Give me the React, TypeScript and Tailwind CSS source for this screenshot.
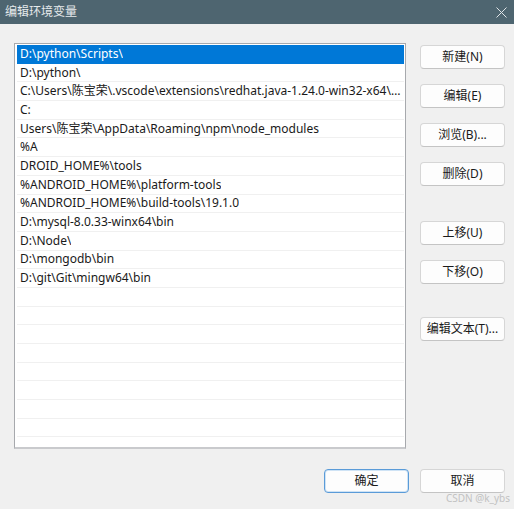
const paths = [
  "D:\\python\\Scripts\\",
  "D:\\python\\",
  "C:\\Users\\陈宝荣\\.vscode\\extensions\\redhat.java-1.24.0-win32-x64\\jre\\17.0.4.1-win32-x86_64\\bin",
  "C:",
  "Users\\陈宝荣\\AppData\\Roaming\\npm\\node_modules",
  "%A",
  "DROID_HOME%\\tools",
  "%ANDROID_HOME%\\platform-tools",
  "%ANDROID_HOME%\\build-tools\\19.1.0",
  "D:\\mysql-8.0.33-winx64\\bin",
  "D:\\Node\\",
  "D:\\mongodb\\bin",
  "D:\\git\\Git\\mingw64\\bin",
];

const emptyRows = 9;

function DialogButton({
  label,
  primary = false,
  className = "",
}: {
  label: string;
  primary?: boolean;
  className?: string;
}) {
  return (
    <button
      className={
        "block w-[85px] h-[24px] shrink-0 rounded-[4px] bg-[#fdfdfd] text-[12px] text-[#1a1a1a] leading-none " +
        (primary
          ? "border border-[#5a9bd8] shadow-[0_0_0_1px_#cfe3f5_inset] "
          : "border border-[#d6d6d6] border-b-[#c4c4c4] ") +
        className
      }
    >
      {label}
    </button>
  );
}

export default function App() {
  return (
    <div
      className="relative w-[514px] h-[509px] bg-[#f0f0f0] overflow-hidden"
      style={{ fontFamily: '"Noto Sans", "Noto Sans CJK SC", sans-serif' }}
    >
      {/* title bar */}
      <div className="h-[24px] bg-[#4e6570] flex items-center justify-between pl-[5px] pr-[6px]">
        <span className="text-[12px] text-[#e6eaec]">编辑环境变量</span>
        <svg width="11" height="11" viewBox="0 0 11 11" className="mr-[1px]">
          <path d="M0.5 0.5 L10.5 10.5 M10.5 0.5 L0.5 10.5" stroke="#dfe4e7" strokeWidth="1" fill="none" />
        </svg>
      </div>

      <div className="flex pl-[14px] pt-[19px]">
        {/* path list */}
        <div className="w-[392px] h-[406px] bg-white border border-[#a7a9ad] border-b-[#c9cacd] border-b-2 pl-[2px] pr-[1px] pt-[1px] overflow-hidden">
          {paths.map((p, i) => (
            <div
              key={i}
              className={
                "h-[18.7px] flex items-center px-[3px] text-[12px] whitespace-nowrap overflow-hidden " +
                (i === 0
                  ? "bg-[#0078d7] text-white"
                  : "text-[#1a1a1a] border-b border-[#f0f0f0]")
              }
            >
              <span className="truncate block">{p}</span>
            </div>
          ))}
          {Array.from({ length: emptyRows }).map((_, i) => (
            <div key={"e" + i} className="h-[18.7px] border-b border-[#f0f0f0]" />
          ))}
        </div>

        {/* side buttons */}
        <div className="flex flex-col ml-[14px] pt-[2px]">
          <DialogButton label="新建(N)" />
          <DialogButton label="编辑(E)" className="mt-[15px]" />
          <DialogButton label="浏览(B)..." className="mt-[15px]" />
          <DialogButton label="删除(D)" className="mt-[15px]" />
          <DialogButton label="上移(U)" className="mt-[35px]" />
          <DialogButton label="下移(O)" className="mt-[15px]" />
          <DialogButton label="编辑文本(T)..." className="mt-[33px]" />
        </div>
      </div>

      {/* bottom buttons */}
      <div className="flex justify-end gap-[11px] pr-[9px] mt-[20px]">
        <DialogButton label="确定" primary />
        <DialogButton label="取消" />
      </div>

      {/* watermark */}
      <span className="absolute right-[4px] bottom-[6px] text-[10px] text-[#c2c2c2] leading-none">
        CSDN @k_ybs
      </span>
    </div>
  );
}
